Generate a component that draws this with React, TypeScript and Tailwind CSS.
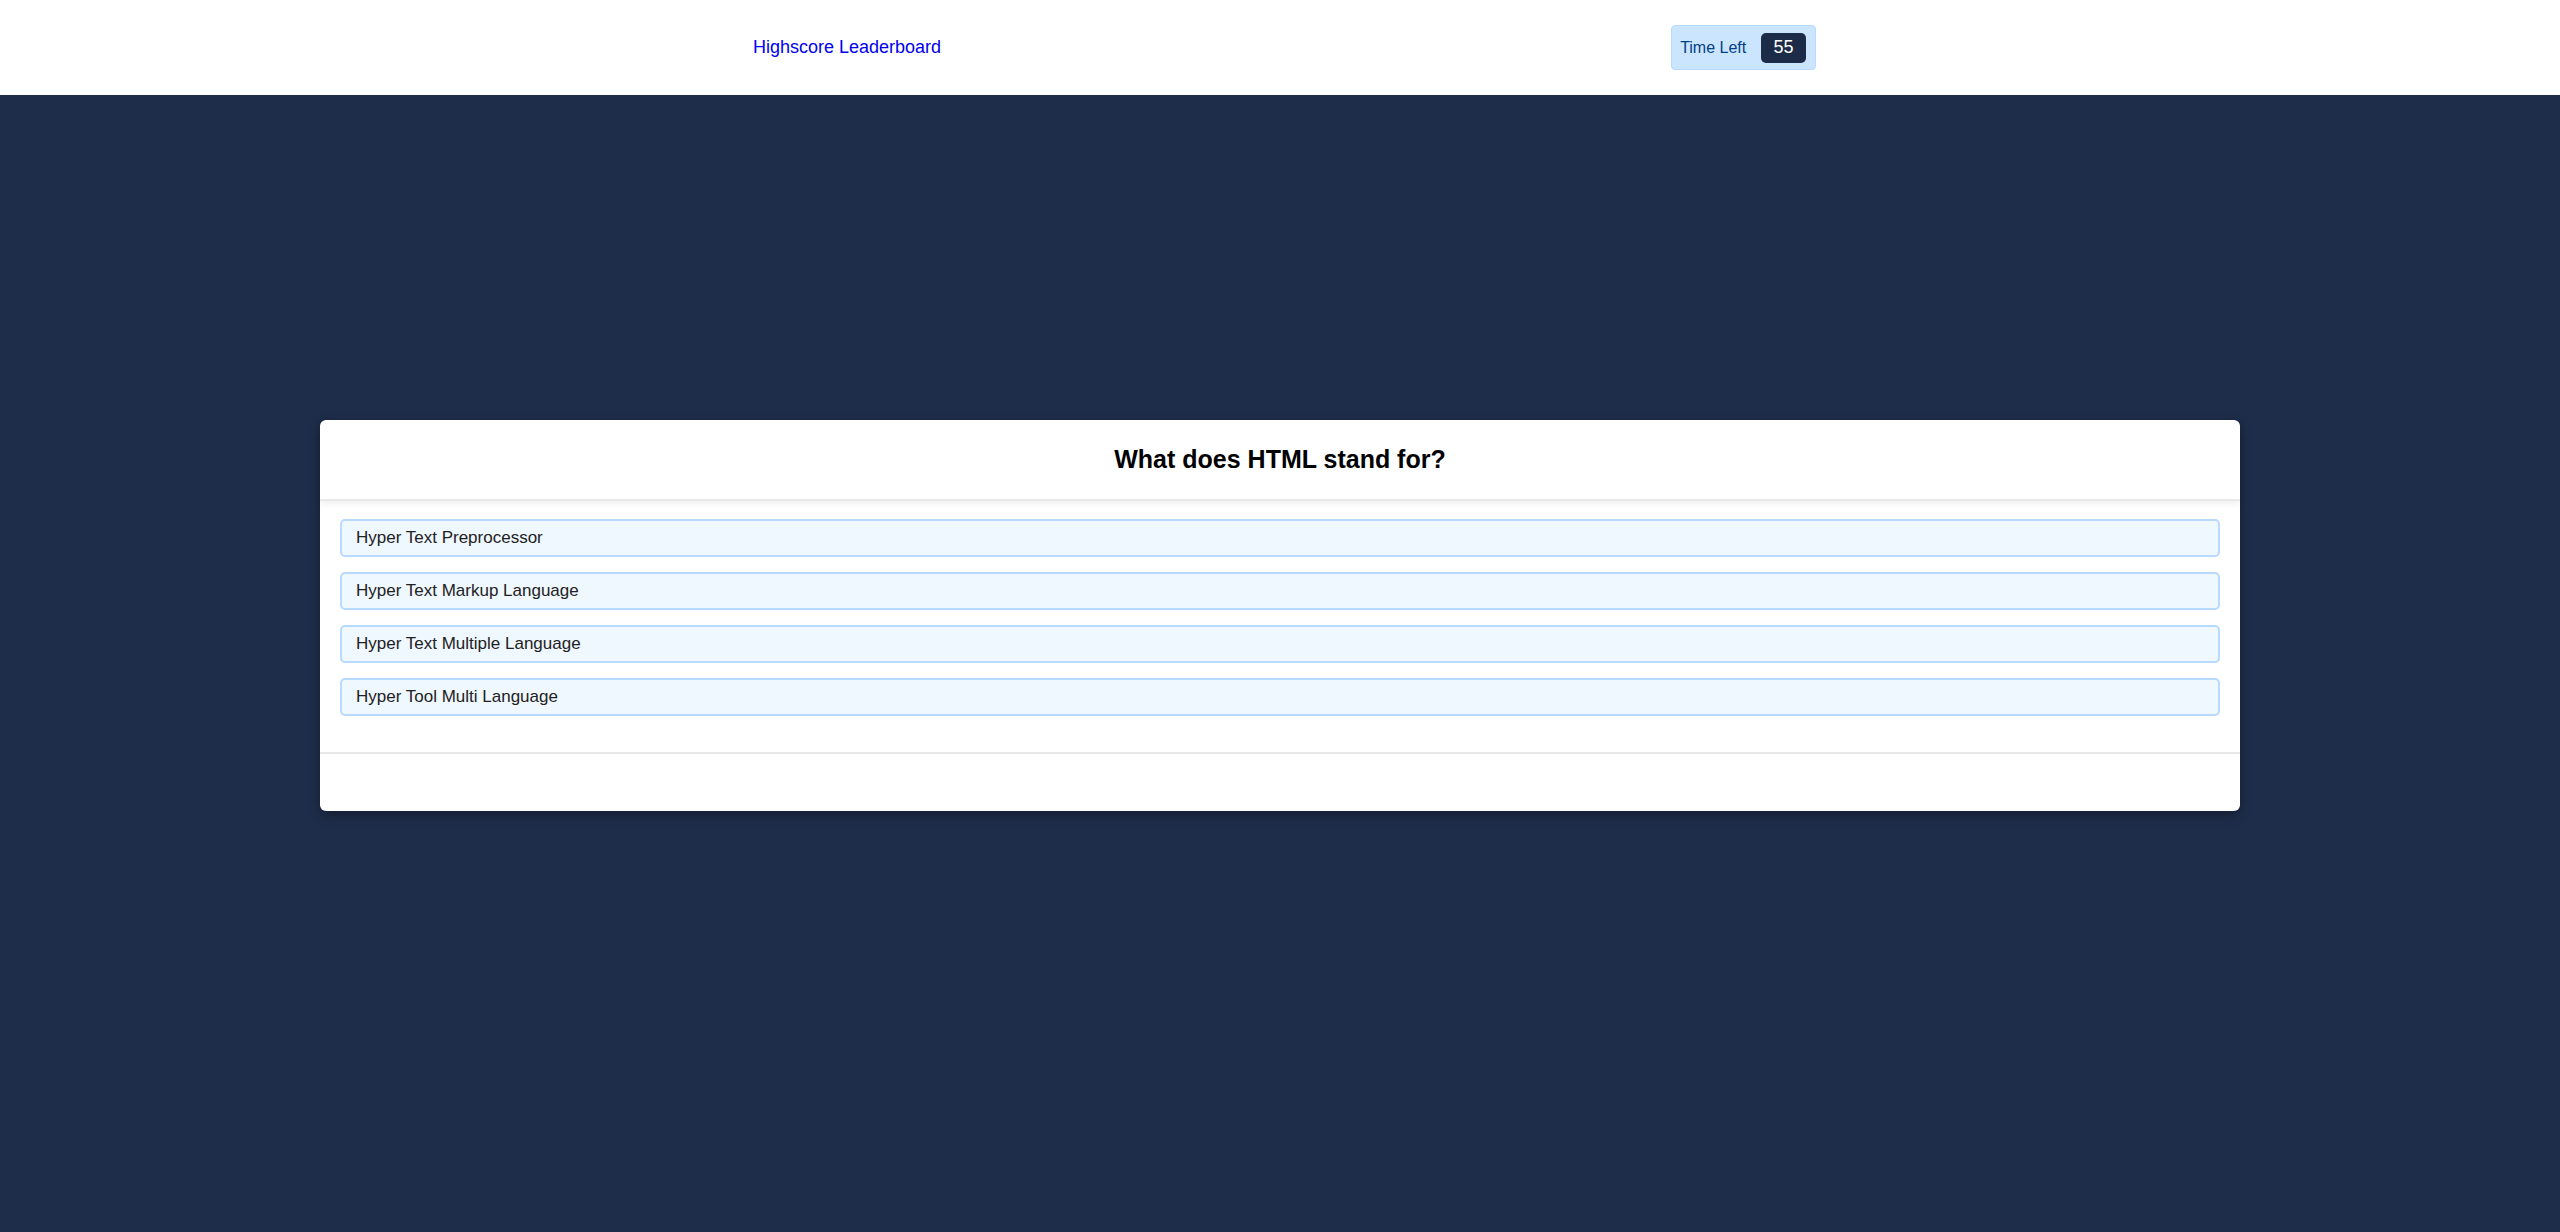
const options = [
  'Hyper Text Preprocessor',
  'Hyper Text Markup Language',
  'Hyper Text Multiple Language',
  'Hyper Tool Multi Language',
];

export default function App() {
  return (
    <div className="min-h-screen bg-[#1e2d4a] font-['Liberation_Sans',Arial,sans-serif]">
      <header className="h-[95px] bg-white flex items-center pl-[753px] gap-[730px]">
        <a href="#" className="text-[18px] text-[#0000ee]">Highscore Leaderboard</a>
        <div className="h-[45px] w-[145px] flex items-center pl-[8px] pr-[9px] justify-between rounded-[4px] bg-[#cce5ff] border border-[#b8daff]">
          <span className="text-[16px] text-[#004085]">Time Left</span>
          <span className="h-[30px] w-[45px] flex items-center justify-center rounded-[5px] bg-[#1c2b48] text-white text-[18px]">55</span>
        </div>
      </header>

      <main className="pt-[325px]">
        <div className="w-[1920px] mx-auto bg-white rounded-[6px] shadow-[0_4px_12px_rgba(0,0,0,0.35)]">
          <div className="h-[81px] flex items-center justify-center border-b-2 border-[#e8e8e8] shadow-[0_3px_6px_rgba(0,0,0,0.06)]">
            <h1 className="text-[25px] font-bold text-black">What does HTML stand for?</h1>
          </div>
          <div className="px-[20px] pt-[18px] pb-[36px] flex flex-col gap-[15px]">
            {options.map(opt => (
              <button
                key={opt}
                className="h-[38px] w-full text-left pl-[14px] rounded-[5px] border-2 border-[#b8daff] bg-[#eff7ff] text-[17px] text-[#222]"
              >
                {opt}
              </button>
            ))}
          </div>
          <div className="h-[59px] border-t-2 border-[#e8e8e8]" />
        </div>
      </main>
    </div>
  );
}
